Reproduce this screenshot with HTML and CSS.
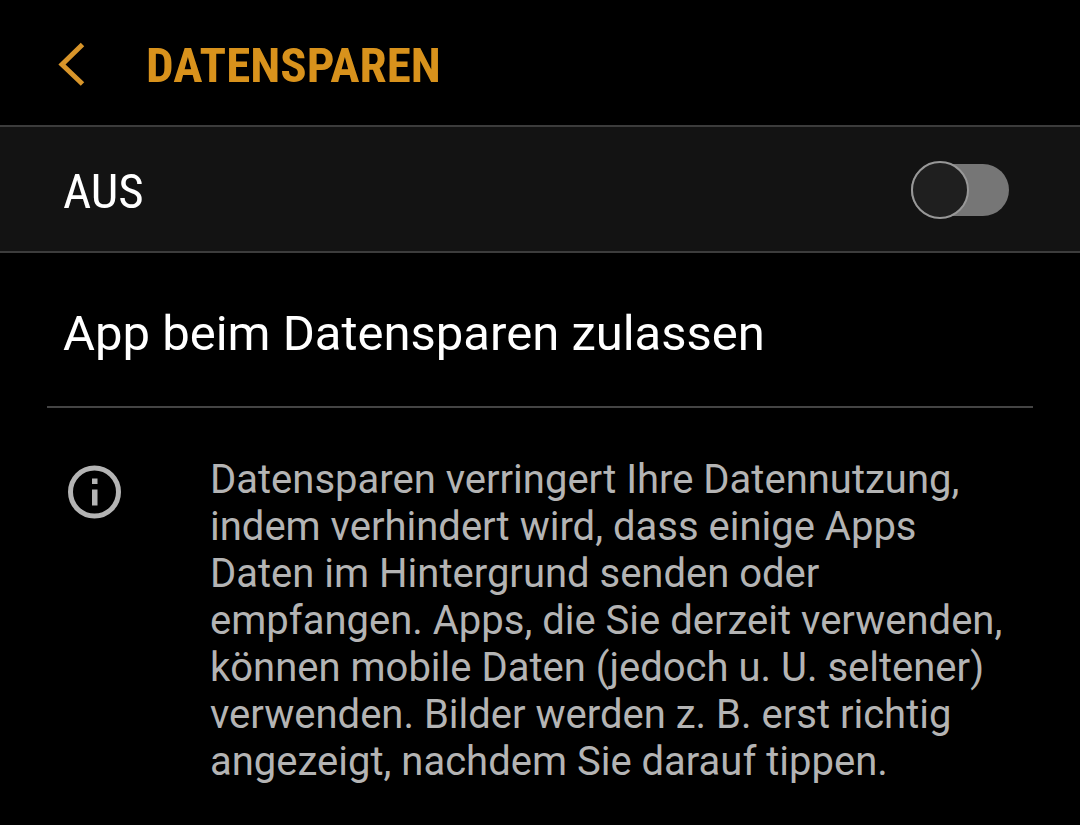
FILE: index.html
```html
<!DOCTYPE html>
<html lang="de">
<head>
  <meta charset="UTF-8">
  <meta name="viewport" content="width=device-width, initial-scale=1.0">
  <title>Datensparen</title>
  <link rel="stylesheet" href="styles.css">
</head>
<body>
  <header class="header">
    <button type="button" class="back" aria-label="Zurück">
      <svg class="back-icon" viewBox="0 0 28 44" fill="none" stroke="currentColor" stroke-width="5">
        <path d="M25.500 2.500 5 22.500 25.500 42"/>
      </svg>
    </button>
    <h1 class="title">DATENSPAREN</h1>
  </header>

  <main>
    <div class="switch-row">
      <label class="switch-label" for="datensparen">AUS</label>
      <input type="checkbox" role="switch" class="switch" id="datensparen">
    </div>

    <a class="item" href="#apps">App beim Datensparen zulassen</a>

    <div class="info">
      <svg class="info-icon" viewBox="0 0 54 54" aria-hidden="true">
        <circle cx="27.500" cy="27" r="24" fill="none" stroke="currentColor" stroke-width="5"/>
        <path fill="currentColor" d="M25 13.500h5.500v5.500H25zM25 24.500h5.500v16H25z"/>
      </svg>
      <p class="info-text">Datensparen verringert Ihre Datennutzung, indem verhindert wird, dass einige Apps Daten im Hintergrund senden oder empfangen. Apps, die Sie derzeit verwenden, können mobile Daten (jedoch u. U. seltener) verwenden. Bilder werden z. B. erst richtig angezeigt, nachdem Sie darauf tippen.</p>
    </div>
  </main>
</body>
</html>
```
FILE: styles.css
```css
*,
*::before {
  margin: 0;
  padding: 0;
  box-sizing: border-box;
}

body {
  font-family: Roboto, 'Liberation Sans', sans-serif;
  background: #000;
  color: #fff;
}

.header {
  display: flex;
  align-items: flex-start;
  gap: 61px;
  padding: 35px 57px 29px;
}

.back {
  display: flex;
  padding: 7px 0;
  border: none;
  background: none;
  color: #d8952a;
  cursor: pointer;
}

.back-icon {
  width: 28px;
  height: 44px;
}

.title {
  font-family: 'Roboto Condensed', Roboto, sans-serif;
  font-size: 49px;
  line-height: 61px;
  font-weight: 700;
  color: #d8921c;
}

.switch-row {
  display: flex;
  align-items: center;
  justify-content: space-between;
  padding: 32px 71px 30px 63px;
  border-top: 2px solid #3c3c3c;
  border-bottom: 2px solid #3c3c3c;
  background: #131313;
}

.switch-label {
  padding-top: 4px;
  font-family: 'Roboto Condensed', Roboto, sans-serif;
  font-size: 49px;
  line-height: 58px;
}

.switch {
  appearance: none;
  display: flex;
  align-items: center;
  width: 98px;
  height: 52px;
  border-radius: 26px;
  background: #767676;
  cursor: pointer;
}

.switch::before {
  content: '';
  flex: none;
  width: 58px;
  height: 58px;
  border: 2px solid #989898;
  border-radius: 50%;
  background: #1f1f1f;
}

.switch:checked {
  justify-content: flex-end;
  background: #d8921c;
}

.item {
  display: block;
  margin: 0 47px;
  padding: 52px 16px 43px;
  border-bottom: 2px solid #444;
  font-size: 49px;
  line-height: 58px;
  color: #fff;
  text-decoration: none;
}

.info {
  display: flex;
  align-items: flex-start;
  gap: 89px;
  padding: 48px 64px 32px 67px;
  color: #b4b4b4;
}

.info-icon {
  flex: none;
  width: 54px;
  height: 54px;
  margin-top: 9px;
}

.info-text {
  font-size: 40px;
  line-height: 47px;
}
```
